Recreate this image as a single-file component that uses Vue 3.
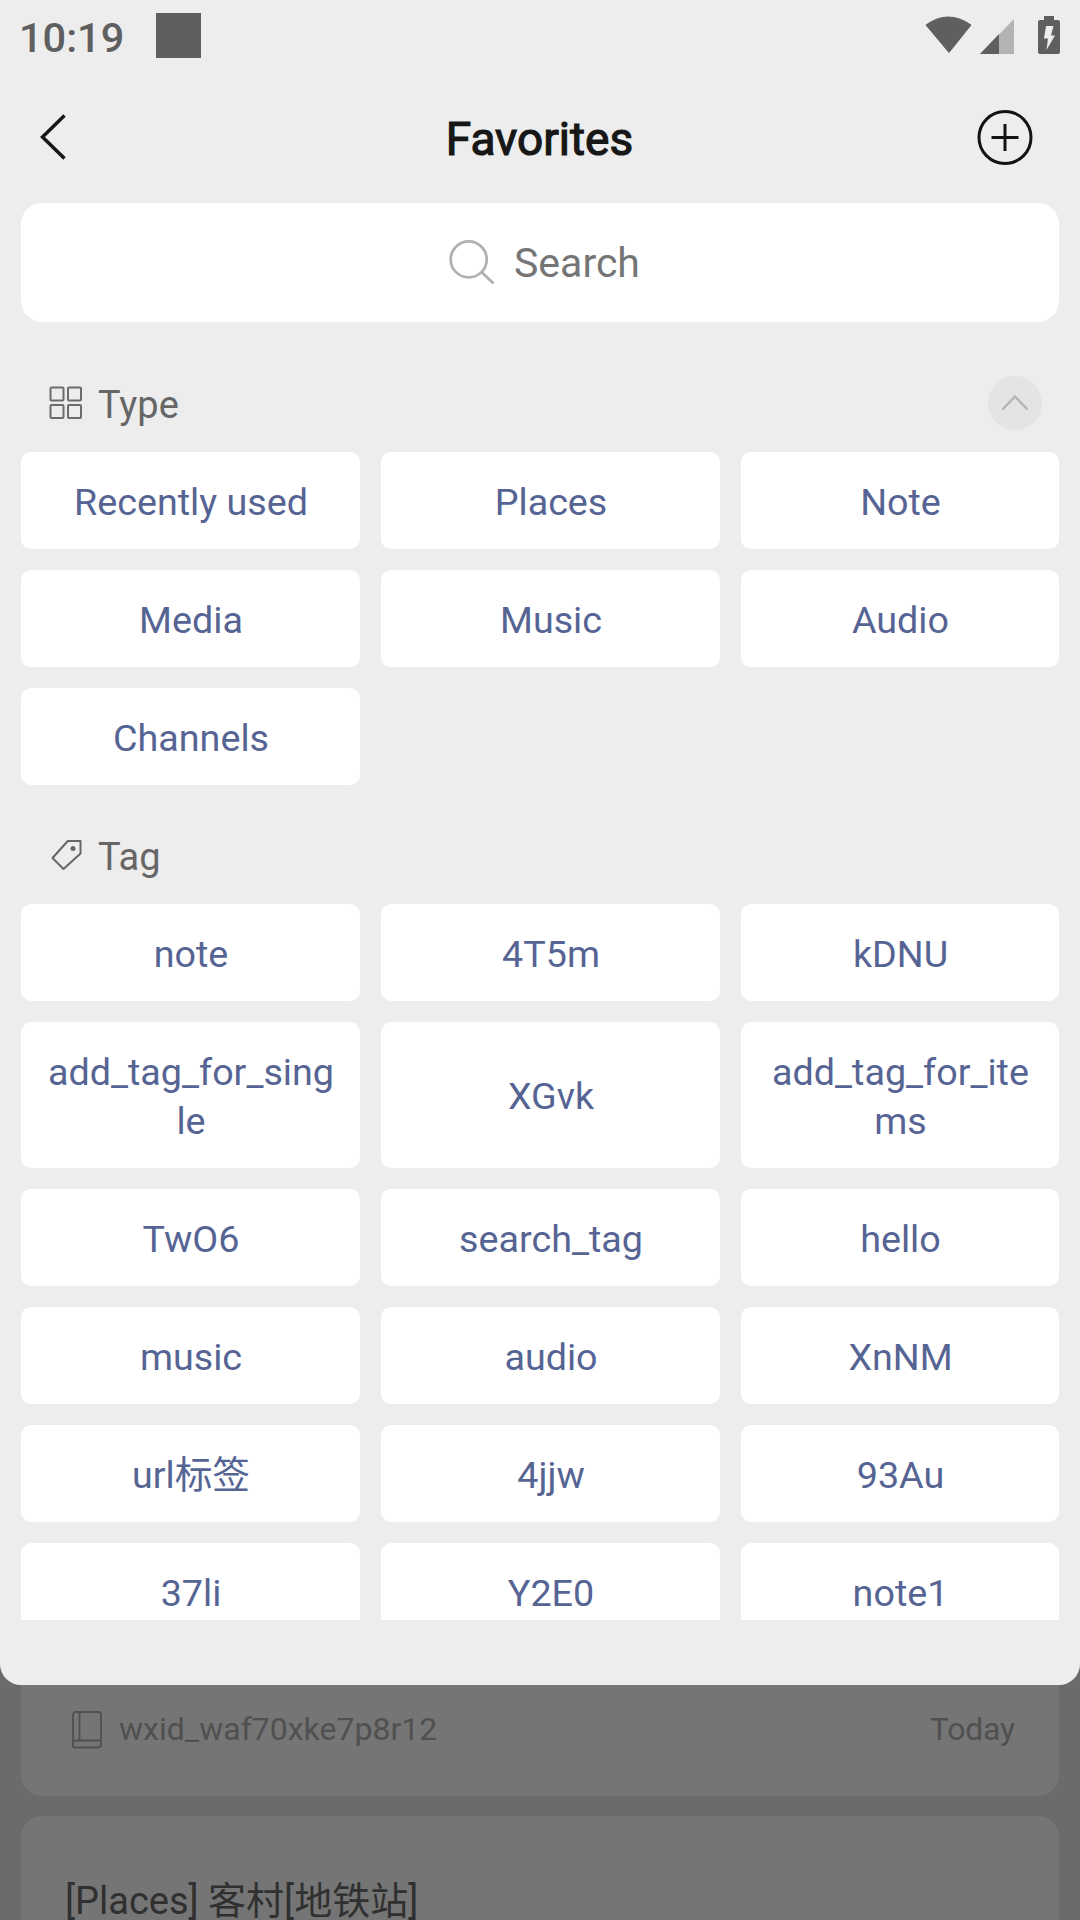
<script setup>
const types = ['Recently used', 'Places', 'Note', 'Media', 'Music', 'Audio', 'Channels']
const tags = [
  'note', '4T5m', 'kDNU',
  'add_tag_for_single', 'XGvk', 'add_tag_for_items',
  'TwO6', 'search_tag', 'hello',
  'music', 'audio', 'XnNM',
  'url标签', '4jjw', '93Au',
  '37li', 'Y2E0', 'note1',
]
</script>

<template>
  <div class="screen">
    <section class="sheet">
      <div class="status">
        <span class="clock">10:19</span>
        <span class="square"></span>
        <svg class="status-icons" width="136" height="40" viewBox="924 15 136 40">
          <path d="M926 25Q948 9 971 25L949 52.500Z" fill="#5f5f5f" stroke="#5f5f5f" stroke-width="1" stroke-linejoin="round" />
          <path d="M1014 19V54H980Z" fill="#b3b3b3" />
          <path d="M999 34V54H980Z" fill="#5f5f5f" />
          <path d="M1044 16h10v4h4q2 0 2 2v30q0 2-2 2h-18q-2 0-2-2v-30q0-2 2-2h4z" fill="#5f5f5f" />
          <path d="M1046 26h7.500l-2.500 9.500h4l-8.500 14.500 1.500-11.500h-4z" fill="#ededed" />
        </svg>
      </div>

      <header class="bar">
        <svg width="30" height="50" viewBox="38 113 30 50" fill="none" stroke="#171717" stroke-width="3.500">
          <path d="M64.500 115.500L42.500 137L64.500 158.500" />
        </svg>
        <h1>Favorites</h1>
        <svg width="56" height="56" viewBox="0 0 56 56" fill="none" stroke="#131313" stroke-width="3">
          <circle cx="28" cy="27.500" r="26" />
          <path d="M14.500 27.500H41.500M28 14V41" />
        </svg>
      </header>

      <div class="search">
        <svg width="46" height="46" viewBox="0 1 46 46" fill="none" stroke="#b0b0b0" stroke-width="2.700">
          <circle cx="19.700" cy="20.400" r="18" />
          <path d="M32.500 33L44.500 44.500" />
        </svg>
        <span>Search</span>
      </div>

      <div class="heading type-heading">
        <svg width="34" height="34" viewBox="0 0 34 34" fill="none" stroke="#6c6c6c" stroke-width="2">
          <rect x="2.500" y="1.500" width="13" height="13" rx="1" />
          <rect x="20" y="1.500" width="13" height="13" rx="1" />
          <rect x="2.500" y="19" width="13" height="13" rx="1" />
          <rect x="20" y="19" width="13" height="13" rx="1" />
        </svg>
        <span>Type</span>
        <i class="collapse">
          <svg width="28" height="18" viewBox="0 0 28 18" fill="none" stroke="#b4b4b4" stroke-width="2.400">
            <path d="M1.500 15.500L14 2.500L26.500 15.500" />
          </svg>
        </i>
      </div>
      <div class="grid">
        <div v-for="t in types" :key="t" class="chip">{{ t }}</div>
      </div>

      <div class="heading tag-heading">
        <svg width="34" height="34" viewBox="0 0 34 34" fill="none" stroke="#666" stroke-width="2">
          <path d="M19.800 2H32.500V14.500L15.500 30L4.500 19Z" stroke-linejoin="round" />
          <circle cx="25" cy="9.500" r="2.500" fill="#666" stroke="none" />
        </svg>
        <span>Tag</span>
      </div>
      <div class="grid tags">
        <div v-for="t in tags" :key="t" class="chip">{{ t }}</div>
      </div>
    </section>

    <main class="behind">
      <article class="card first">
        <svg width="30" height="38" viewBox="0 0 30 38" fill="none" stroke="#505050" stroke-width="1.800">
          <path d="M4 1H26Q29 1 29 4V33Q29 36.500 26 36.500H2Q1 36.500 1 34V4Q1 1 4 1ZM7.500 1V29.500M1 33V31.500Q1 29.500 4 29.500H29" />
        </svg>
        <span class="who">wxid_waf70xke7p8r12</span>
        <span class="day">Today</span>
      </article>
      <article class="card second">[Places] 客村[地铁站]</article>
    </main>
  </div>
</template>

<style>
body {
  background: #6b6b6b;
}
</style>

<style scoped>
* {
  box-sizing: border-box;
}
.screen {
  width: 1080px;
  height: 1920px;
  overflow: hidden;
  display: flex;
  flex-direction: column;
  background: #6b6b6b;
  font-family: Roboto, "Noto Sans CJK SC", sans-serif;
}
.sheet {
  position: relative;
  z-index: 1;
  height: 1685px;
  flex: none;
  background: #ededed;
  border-radius: 0 0 21px 21px;
}
.status {
  height: 74px;
  display: flex;
  align-items: center;
  padding: 0 20px 3px 19px;
  color: #5f5f5f;
}
.clock {
  width: 137px;
  font-size: 41.500px;
  line-height: 48px;
  font-weight: 500;
  padding-top: 4px;
}
.square {
  width: 45px;
  height: 45px;
  background: #5f5f5f;
}
.status-icons {
  margin-left: auto;
  margin-top: -2px;
}
.bar {
  height: 128px;
  display: flex;
  align-items: center;
  justify-content: space-between;
  padding: 0 47px 1px 38px;
}
.bar h1 {
  margin: 0;
  padding: 3px 0 0 34px;
  font-size: 46px;
  line-height: 54px;
  font-weight: 400;
  -webkit-text-stroke: 1.200px #171717;
  color: #171717;
}
.search {
  height: 119px;
  margin: 1px 21px 0;
  display: flex;
  align-items: center;
  padding-left: 428px;
  background: #fff;
  border-radius: 21px;
  font-size: 41px;
  color: #757575;
}
.search span {
  margin-left: 19px;
  padding-top: 1px;
}
.heading {
  display: flex;
  align-items: center;
  padding: 0 38px 0 48px;
  font-size: 38px;
  line-height: 44px;
  color: #666;
}
.heading span {
  margin-left: 16px;
  padding-top: 2px;
}
.type-heading {
  height: 129.600px;
  padding-top: 34px;
  padding-bottom: 1px;
}
.type-heading span {
  padding-top: 4px;
}
.tag-heading {
  height: 119px;
  padding-top: 24px;
}
.collapse {
  width: 54px;
  height: 54px;
  margin-left: auto;
  border-radius: 50%;
  background: #e4e4e4;
  display: flex;
  align-items: center;
  justify-content: center;
}
.grid {
  display: grid;
  grid-template-columns: 339px 339px 318px;
  grid-auto-rows: minmax(97px, auto);
  gap: 21px;
  padding: 0 21px;
}
.tags {
  height: 716px;
  overflow: hidden;
  grid-template-rows: 97px 146px;
}
.chip {
  display: flex;
  align-items: center;
  justify-content: center;
  padding: 4px 24px 0 25px;
  background: #fff;
  border-radius: 10px;
  color: #566494;
  font-size: 37.700px;
  line-height: 49px;
  text-align: center;
  word-break: break-all;
}
.card {
  margin: 0 21px;
  background: #757575;
}
.first {
  height: 111px;
  display: flex;
  align-items: flex-start;
  padding: 26px 44px 0 51px;
  border-radius: 0 0 21px 21px;
  font-size: 32px;
  line-height: 36px;
  color: #505050;
}
.who {
  margin-left: 17px;
}
.day {
  margin-left: auto;
  letter-spacing: -0.200px;
}
.second {
  height: 160px;
  margin-top: 20px;
  padding: 60px 44px 0;
  border-radius: 21px 21px 0 0;
  font-size: 38px;
  line-height: 50px;
  color: #303030;
}
</style>
